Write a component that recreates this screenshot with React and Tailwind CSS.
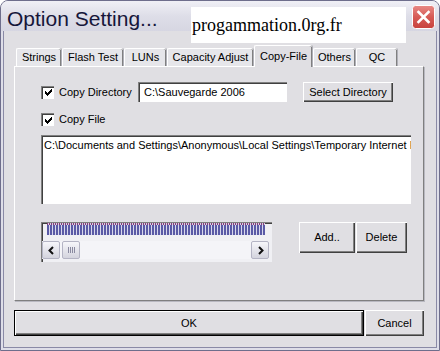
import React from "react";

const raised =
  "bg-[#e0dfe3] shadow-[inset_1px_1px_#ffffff,inset_-1px_-1px_#404040,inset_-2px_-2px_#808080]";
const sunken =
  "bg-white border-t border-l border-[#808080] border-r-[#f4f4f4] border-b-[#f4f4f4] shadow-[inset_1px_1px_#404040]";

function CheckBox() {
  return (
    <span className={"w-[13px] h-[13px] shrink-0 flex items-center justify-center " + sunken}>
      <svg width="9" height="9" viewBox="0 0 9 9" shapeRendering="crispEdges">
        <path d="M1 3h1v3h-1zM2 4h1v3h-1zM3 5h1v3h-1zM4 4h1v3h-1zM5 3h1v3h-1zM6 2h1v3h-1zM7 1h1v3h-1z" fill="#000" />
      </svg>
    </span>
  );
}

function Tab({ label, w, active }) {
  if (active) {
    return (
      <div
        className={
          "relative z-10 -mb-px h-[22px] flex items-start justify-center pt-[2px] bg-[#e0dfe3] border-t border-l border-white rounded-t-[2px] shadow-[inset_-1px_0_#808080,1px_0_#b0b0b8] " +
          w
        }
      >
        {label}
      </div>
    );
  }
  return (
    <div
      className={
        "h-[18px] flex items-center justify-center bg-[#e6e6ea] border-t border-l border-white rounded-t-[2px] shadow-[inset_-1px_0_#808080,1px_0_#b0b0b8] " +
        w
      }
    >
      {label}
    </div>
  );
}

function Chevron({ dir }) {
  const d = dir === "left" ? "M6 2 L2.5 5.5 L6 9" : "M3 2 L6.5 5.5 L3 9";
  return (
    <svg width="9" height="11" viewBox="0 0 9 11">
      <path d={d} stroke="#111" strokeWidth="2" fill="none" />
    </svg>
  );
}

function ScrollBtn({ children }) {
  return (
    <div className="w-[18px] h-[18px] shrink-0 flex items-center justify-center rounded-[2px] border border-[#b4b4c4] bg-gradient-to-b from-[#f6f6fa] to-[#d4d4de]">
      {children}
    </div>
  );
}

export default function App() {
  const tabs = [
    ["Strings", "w-[45px]"],
    ["Flash Test", "w-[61px]"],
    ["LUNs", "w-[42px]"],
    ["Capacity Adjust", "w-[86px]"],
    ["Copy-File", "w-[58px]", true],
    ["Others", "w-[42px]"],
    ["QC", "w-[41px]"],
  ];

  return (
    <div className="relative w-[440px] h-[351px] flex flex-col bg-[#dedee8] border border-[#6e6e8c] rounded-t-[8px] overflow-hidden font-['Liberation_Sans',Arial,sans-serif] text-[11px] text-black">
      {/* title bar */}
      <div className="h-[30px] shrink-0 flex items-start pl-[6px] pt-[7px] bg-gradient-to-b from-[#f0f0f6] via-[#dedee8] to-[#d6d6e2]">
        <span className="text-[21px] leading-[21px] text-[#16163a]">Option Setting...</span>
        <div className="ml-auto mr-[4px] -mt-[3px]">
          <svg width="23" height="24" viewBox="0 0 23 24">
            <defs>
              <linearGradient id="cl" x1="0" y1="0" x2="0" y2="1">
                <stop offset="0" stopColor="#e88a86" />
                <stop offset="0.5" stopColor="#d65a55" />
                <stop offset="1" stopColor="#c8423e" />
              </linearGradient>
            </defs>
            <rect x="0.5" y="0.5" width="22" height="23" rx="3" fill="url(#cl)" stroke="#ffffff" />
            <path d="M6.5 7 L16.5 17 M16.5 7 L6.5 17" stroke="#ffffff" strokeWidth="2.6" strokeLinecap="square" />
          </svg>
        </div>
      </div>

      {/* watermark overlay */}
      <div className="absolute left-[190px] top-[6px] w-[215px] h-[36px] bg-white pl-[1px] pt-[9px] font-['Liberation_Serif','Times_New_Roman',serif] text-[18px] leading-[18px] text-black">
        progammation.0rg.fr
      </div>

      {/* body */}
      <div className="flex-1 mx-[2px] mb-[2px] flex flex-col bg-[#e0dfe3] border-x border-b border-[#8a8aa6] pl-[10px] pt-[14px]">
        <div className="flex items-end gap-px pl-[2px] h-[21px]">
          {tabs.map(([l, w, a]) => (
            <Tab key={l} label={l} w={w} active={a} />
          ))}
        </div>

        <div className="w-[410px] h-[235px] flex flex-col bg-[#e0dfe3] border-t border-l border-white border-r border-b border-r-[#7f7f7f] border-b-[#7f7f7f] shadow-[1px_1px_0_#b8b8c0] pl-[26px] pt-[15px]">
          <div className="flex items-center h-[20px]">
            <div className="w-[97px] flex items-center gap-[5px]">
              <CheckBox />
              <span>Copy Directory</span>
            </div>
            <div className={"w-[149px] h-[20px] flex items-center pl-[5px] " + sunken}>C:\Sauvegarde 2006</div>
            <button className={"ml-[16px] w-[90px] h-[20px] flex items-center justify-center " + raised}>
              Select Directory
            </button>
          </div>

          <div className="flex items-center gap-[5px] h-[13px] mt-[11px]">
            <CheckBox />
            <span>Copy File</span>
          </div>

          <div className={"mt-[9px] w-[370px] h-[69px] pl-[2px] pt-[1px] whitespace-nowrap overflow-hidden " + sunken}>
            C:\Documents and Settings\Anonymous\Local Settings\Temporary Internet Files
          </div>

          <div className="flex items-start mt-[18px]">
            <div className={"w-[231px] h-[40px] flex flex-col bg-[#f0f0f4] " + sunken.replace("bg-white ", "")}>
              <div className="ml-[5px] w-[218px] h-[12px] flex flex-col">
                <div className="h-[2px] bg-[repeating-linear-gradient(90deg,#8a3a78_0px,#8a3a78_1px,#d0d0e4_1px,#d0d0e4_2px)]" />
                <div className="flex-1 bg-[repeating-linear-gradient(90deg,#5a5aa6_0px,#5a5aa6_2px,#d8d8ec_2px,#d8d8ec_3px)]" />
              </div>
              <div className="mt-[6px] w-[227px] h-[18px] flex items-center bg-[#f4f4f8]">
                <ScrollBtn>
                  <Chevron dir="left" />
                </ScrollBtn>
                <div className="ml-[2px]">
                  <ScrollBtn>
                    <div className="flex gap-px">
                      <span className="w-px h-[6px] bg-[#8a8aa0]" />
                      <span className="w-px h-[6px] bg-[#8a8aa0]" />
                      <span className="w-px h-[6px] bg-[#8a8aa0]" />
                      <span className="w-px h-[6px] bg-[#8a8aa0]" />
                    </div>
                  </ScrollBtn>
                </div>
                <div className="flex-1" />
                <ScrollBtn>
                  <Chevron dir="right" />
                </ScrollBtn>
              </div>
            </div>
            <button className={"ml-[27px] w-[56px] h-[31px] flex items-center justify-center " + raised}>Add..</button>
            <button className={"ml-px w-[51px] h-[31px] flex items-center justify-center " + raised}>Delete</button>
          </div>
        </div>

        <div className="flex mt-[9px]">
          <button className="w-[350px] h-[26px] border border-black flex">
            <span className={"flex-1 flex items-center justify-center " + raised}>OK</span>
          </button>
          <button className={"ml-px w-[59px] h-[26px] flex items-center justify-center " + raised}>Cancel</button>
        </div>
      </div>
    </div>
  );
}
